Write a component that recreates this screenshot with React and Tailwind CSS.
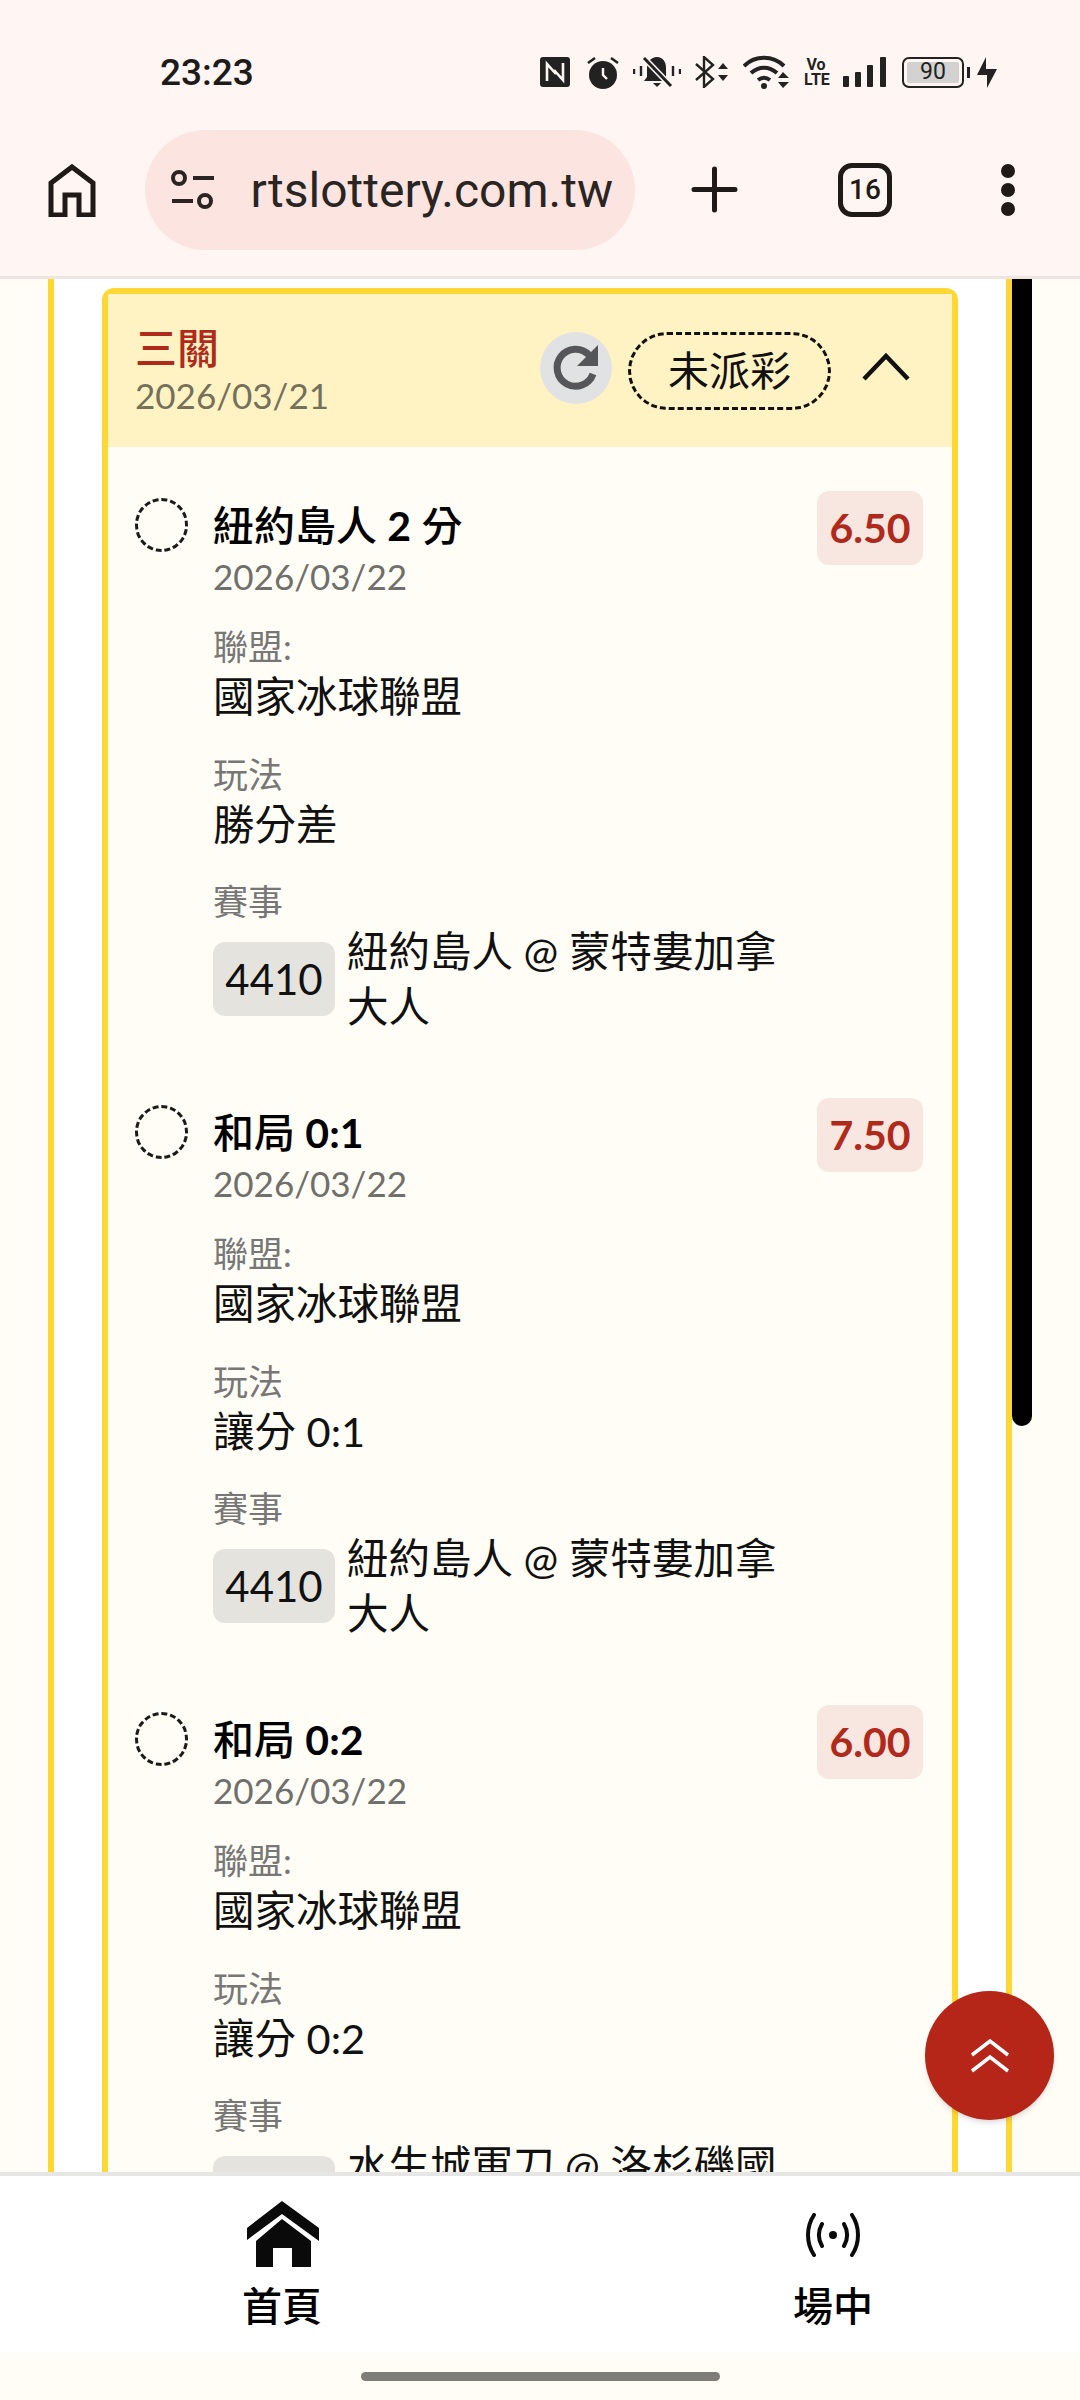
import React from "react";

const font = "[font-family:Lato,'Noto_Sans_CJK_TC',sans-serif]";

const NfcIcon = () => (
  <svg width="30" height="30" viewBox="0 0 30 30">
    <rect width="30" height="30" rx="3" fill="#222" />
    <path d="M7 24V7l9 10M23 6v17l-9-10" fill="none" stroke="#fff5f3" strokeWidth="2.6" />
  </svg>
);

const AlarmIcon = () => (
  <svg width="32" height="33" viewBox="0 0 32 33">
    <circle cx="16" cy="19" r="14" fill="#222" />
    <path d="M1 7l7-5M31 7l-7-5" stroke="#222" strokeWidth="2.6" />
    <path d="M16 12v7l4 4" fill="none" stroke="#fff5f3" strokeWidth="2.4" />
  </svg>
);

const BellOffIcon = () => (
  <svg width="48" height="32" viewBox="0 0 48 32">
    <path d="M24 1c6 0 9 5 9 11v9l3 4H11l3-4v-9c0-6 4-11 10-11zM20 27h8l-4 4z" fill="#222" />
    <path d="M11 2l27 28" stroke="#fff5f3" strokeWidth="6" />
    <path d="M11 2l27 28" stroke="#222" strokeWidth="3" />
    <path d="M1 13v5M8 10v10M40 10v10M47 13v5" stroke="#222" strokeWidth="2.4" />
  </svg>
);

const BluetoothIcon = () => (
  <svg width="35" height="32" viewBox="0 0 35 32">
    <path d="M2 8l17 15-9 8V1l9 8L2 24" fill="none" stroke="#222" strokeWidth="2.4" />
    <path d="M24 13l5-6 5 6zM24 19l5 6 5-6z" fill="#222" />
  </svg>
);

const WifiIcon = () => (
  <svg width="46" height="34" viewBox="0 0 46 34">
    <path d="M1 11C12 0 30 0 41 11M8 18c8-7 18-7 26 0M15 25c4-3 8-3 12 0" fill="none" stroke="#222" strokeWidth="4" />
    <circle cx="21" cy="31" r="3" fill="#222" />
    <path d="M35 23l5-6 6 6zM35 27l5 6 6-6z" fill="#222" />
  </svg>
);

const SignalIcon = () => (
  <svg width="43" height="30" viewBox="0 0 43 30">
    <rect x="0" y="19" width="6" height="11" rx="1" fill="#222" />
    <rect x="12" y="15" width="6" height="15" rx="1" fill="#222" />
    <rect x="24" y="8" width="6" height="22" rx="1" fill="#222" />
    <rect x="37" y="0" width="6" height="30" rx="1" fill="#222" />
  </svg>
);

const BoltIcon = () => (
  <svg width="20" height="31" viewBox="0 0 20 31">
    <path d="M9 0v12h11L10 31V18H0z" fill="#222" />
  </svg>
);

const StatusBar = () => (
  <div className="h-[110px] pt-[34px] pl-[160px] pr-[83px] flex items-center justify-between">
    <span className="mt-[2px] text-[37px] font-medium text-[#1d1b1a] [font-family:Roboto,sans-serif]">23:23</span>
    <div className="flex items-center">
      <NfcIcon />
      <div className="ml-[17px]"><AlarmIcon /></div>
      <div className="ml-[14px]"><BellOffIcon /></div>
      <div className="ml-[13px]"><BluetoothIcon /></div>
      <div className="ml-[14px]"><WifiIcon /></div>
      <div className="ml-[15px] w-[24px] text-[16px] leading-[15px] font-bold text-[#222] text-center [font-family:Roboto,sans-serif]">
        Vo
        <br />
        LTE
      </div>
      <div className="ml-[15px]"><SignalIcon /></div>
      <div className="ml-[16px] flex items-center">
        <div className="w-[62px] h-[31px] rounded-[7px] border-[2px] border-[#222] p-[3px]">
          <div className="h-full rounded-[2px] bg-[#d4d2d0] flex items-center justify-center text-[23px] text-[#222] [font-family:Roboto,sans-serif]">
            90
          </div>
        </div>
        <div className="ml-[3px] w-[3px] h-[11px] bg-[#222]" />
      </div>
      <div className="ml-[7px]"><BoltIcon /></div>
    </div>
  </div>
);

const Toolbar = () => (
  <div className="h-[169px] pt-[21px] pb-[28px] flex items-center border-b-[3px] border-[#f0e4e1]">
    <svg className="ml-[48px]" width="48" height="54" viewBox="0 0 48 54" fill="none" stroke="#1f1a18" strokeWidth="5">
      <path d="M3 52V20L24 4l21 16v32H31V32H17v20z" />
    </svg>
    <div className="ml-[49px] w-[490px] h-[120px] rounded-[60px] bg-[#fce4e0] flex items-center pl-[25px]">
      <svg width="46" height="40" viewBox="0 0 46 40" fill="none" stroke="#2a2422" strokeWidth="4">
        <circle cx="9" cy="8" r="6" />
        <circle cx="35" cy="31" r="6" />
        <path d="M23 8h21M2 31h21" />
      </svg>
      <div className="relative mt-[3px] ml-[26px] w-[371px] overflow-hidden flex justify-end">
        <span className="text-[48px] leading-[62px] whitespace-nowrap text-[#2a2422] [font-family:Roboto,sans-serif]">
          sportslottery.com.tw
        </span>
        <div className="absolute left-0 top-0 h-full w-[10px] bg-[#fce4e0]" />
      </div>
    </div>
    <svg className="ml-[56px]" width="47" height="47" viewBox="0 0 47 47" stroke="#1f1a18" strokeWidth="5" strokeLinecap="round">
      <path d="M23.5 3v41M3 23.5h41" />
    </svg>
    <div className="ml-[100px] w-[54px] h-[54px] rounded-[14px] border-[5px] border-[#1f1a18] flex items-center justify-center text-[28px] font-medium text-[#1f1a18] [font-family:Roboto,sans-serif]">
      16
    </div>
    <div className="ml-[109px] flex flex-col gap-[5px]">
      <div className="w-[14px] h-[14px] rounded-full bg-[#1f1a18]" />
      <div className="w-[14px] h-[14px] rounded-full bg-[#1f1a18]" />
      <div className="w-[14px] h-[14px] rounded-full bg-[#1f1a18]" />
    </div>
  </div>
);

const Item = ({ name, score, suffix, odds, play, code, match }) => (
  <div className="h-[607px] pt-[44px] pl-[27px] pr-[29px] flex items-start">
    <div className="mt-[7px] w-[53px] h-[54px] shrink-0 rounded-full border-[3px] border-dashed border-[#1a1a1a]" />
    <div className="ml-[25px] flex-1">
      <div className="mt-[5px] text-[41px] leading-[60px] font-medium text-black">
        {name} <span className="font-bold">{score}</span>
        {suffix}
      </div>
      <div className="mt-[1px] text-[35px] leading-[38px] text-[#6f6f6b]">2026/03/22</div>
      <div className="mt-[31px] text-[35px] leading-[40px] text-[#777]">聯盟:</div>
      <div className="mt-[4px] text-[41.5px] leading-[52px] text-[#111]">國家冰球聯盟</div>
      <div className="mt-[32px] text-[35px] leading-[40px] text-[#777]">玩法</div>
      <div className="mt-[4px] text-[41.5px] leading-[52px] text-[#111]">{play}</div>
      <div className="mt-[31px] text-[35px] leading-[40px] text-[#777]">賽事</div>
      <div className="mt-[3px] flex items-center">
        <div className="w-[122px] h-[74px] shrink-0 rounded-[12px] bg-[#e5e3de] flex items-center justify-center text-[42px] text-[#111]">
          {code}
        </div>
        <div className="ml-[12px] w-[436px] text-[41.5px] leading-[55px] text-[#111]">{match}</div>
      </div>
    </div>
    <div className="w-[106px] h-[74px] shrink-0 rounded-[12px] bg-[#f8e7e1] flex items-center justify-center text-[41px] font-bold text-[#b02a1c]">
      {odds}
    </div>
  </div>
);

const Card = () => (
  <div className="rounded-t-[12px] border-x-[6px] border-t-[6px] border-[#fdd835] bg-[#fffdf5]">
    <div className="h-[153px] bg-[#fff3c4] pl-[27px] pr-[42px] flex items-center justify-between">
      <div>
        <div className="text-[42px] leading-[48px] font-medium text-[#b02a1c]">三關</div>
        <div className="text-[35px] leading-[46px] text-[#75705a]">2026/03/21</div>
      </div>
      <div className="flex items-center">
        <div className="w-[72px] h-[72px] mb-[5px] rounded-full bg-[#e0e2e3] flex items-center justify-center">
          <svg width="52" height="52" viewBox="0 0 52 52" fill="none">
            <path d="M43 32a18.5 18.5 0 1 1-4-19" stroke="#56565a" strokeWidth="7" />
            <path d="M48 3v21H27z" fill="#56565a" />
          </svg>
        </div>
        <div className="ml-[16px] w-[203px] h-[78px] rounded-[39px] border-[3px] border-dashed border-[#111] flex items-center justify-center text-[41px] text-[#111]">
          未派彩
        </div>
        <svg className="ml-[31px] mb-[8px]" width="48" height="28" viewBox="0 0 48 28" fill="none" stroke="#111" strokeWidth="4.5">
          <path d="M2 26L24 3l22 23" />
        </svg>
      </div>
    </div>
    <Item name="紐約島人" score="2" suffix=" 分" odds="6.50" play="勝分差" code="4410" match="紐約島人 @ 蒙特婁加拿大人" />
    <Item name="和局" score="0:1" odds="7.50" play="讓分 0:1" code="4410" match="紐約島人 @ 蒙特婁加拿大人" />
    <Item name="和局" score="0:2" odds="6.00" play="讓分 0:2" code="4412" match="水生城軍刀 @ 洛杉磯國王" />
  </div>
);

const BottomNav = () => (
  <div className="relative z-10 border-t-[4px] border-[#e6e6e4]">
    <div className="h-[176px] bg-white pt-[25px] pl-[242px] pr-[207px] flex justify-between">
      <div className="w-[80px] flex flex-col items-center">
        <svg width="73" height="66" viewBox="0 0 73 66" fill="#0a0a0a">
          <path d="M36 0l37 27v13L36 13 1 39V27z" />
          <path d="M36 18l29 22v26H46V47H27v19H10V40z" />
        </svg>
        <div className="mt-[15px] text-[40px] leading-[48px] font-medium text-black">首頁</div>
      </div>
      <div className="w-[80px] flex flex-col items-center">
        <svg className="mt-[12px] mb-[10px]" width="56" height="44" viewBox="0 0 56 44" fill="none" stroke="#0a0a0a" strokeWidth="4" strokeLinecap="round">
          <path d="M9 2c-8 12-8 28 0 40M47 2c8 12 8 28 0 40M17 11c-4 7-4 15 0 22M39 11c4 7 4 15 0 22" />
          <circle cx="28" cy="22" r="4" fill="#0a0a0a" stroke="none" />
        </svg>
        <div className="mt-[15px] text-[40px] leading-[48px] font-medium text-black">場中</div>
      </div>
    </div>
    <div className="h-[48px] bg-[#fffdf5] flex items-center justify-center">
      <div className="w-[359px] h-[9px] rounded-full bg-[#7f7d77]" />
    </div>
  </div>
);

export default function App() {
  return (
    <div className={`relative w-[1080px] h-[2400px] overflow-hidden flex flex-col bg-[#fffdf5] ${font}`}>
      <div className="bg-[#fff5f3]">
        <StatusBar />
        <Toolbar />
      </div>

      <div className="relative flex-1 overflow-hidden pl-[48px] pr-[68px]">
        <div className="h-full border-x-[6px] border-[#fdd835] bg-white px-[48px] pt-[9px]">
          <Card />
        </div>
        {/* page scrollbar */}
        <div className="absolute top-0 left-[1012px] w-[20px] h-[1147px] rounded-b-full bg-black" />
      </div>

      <BottomNav />

      <div className="absolute left-[925px] top-[1991px] z-20 w-[129px] h-[129px] rounded-full bg-[#b52518] shadow-md flex items-center justify-center">
        <svg width="40" height="34" viewBox="0 0 40 34" fill="none" stroke="#fff" strokeWidth="3.5">
          <path d="M2 16L20 2l18 14M2 32L20 18l18 14" />
        </svg>
      </div>
    </div>
  );
}
